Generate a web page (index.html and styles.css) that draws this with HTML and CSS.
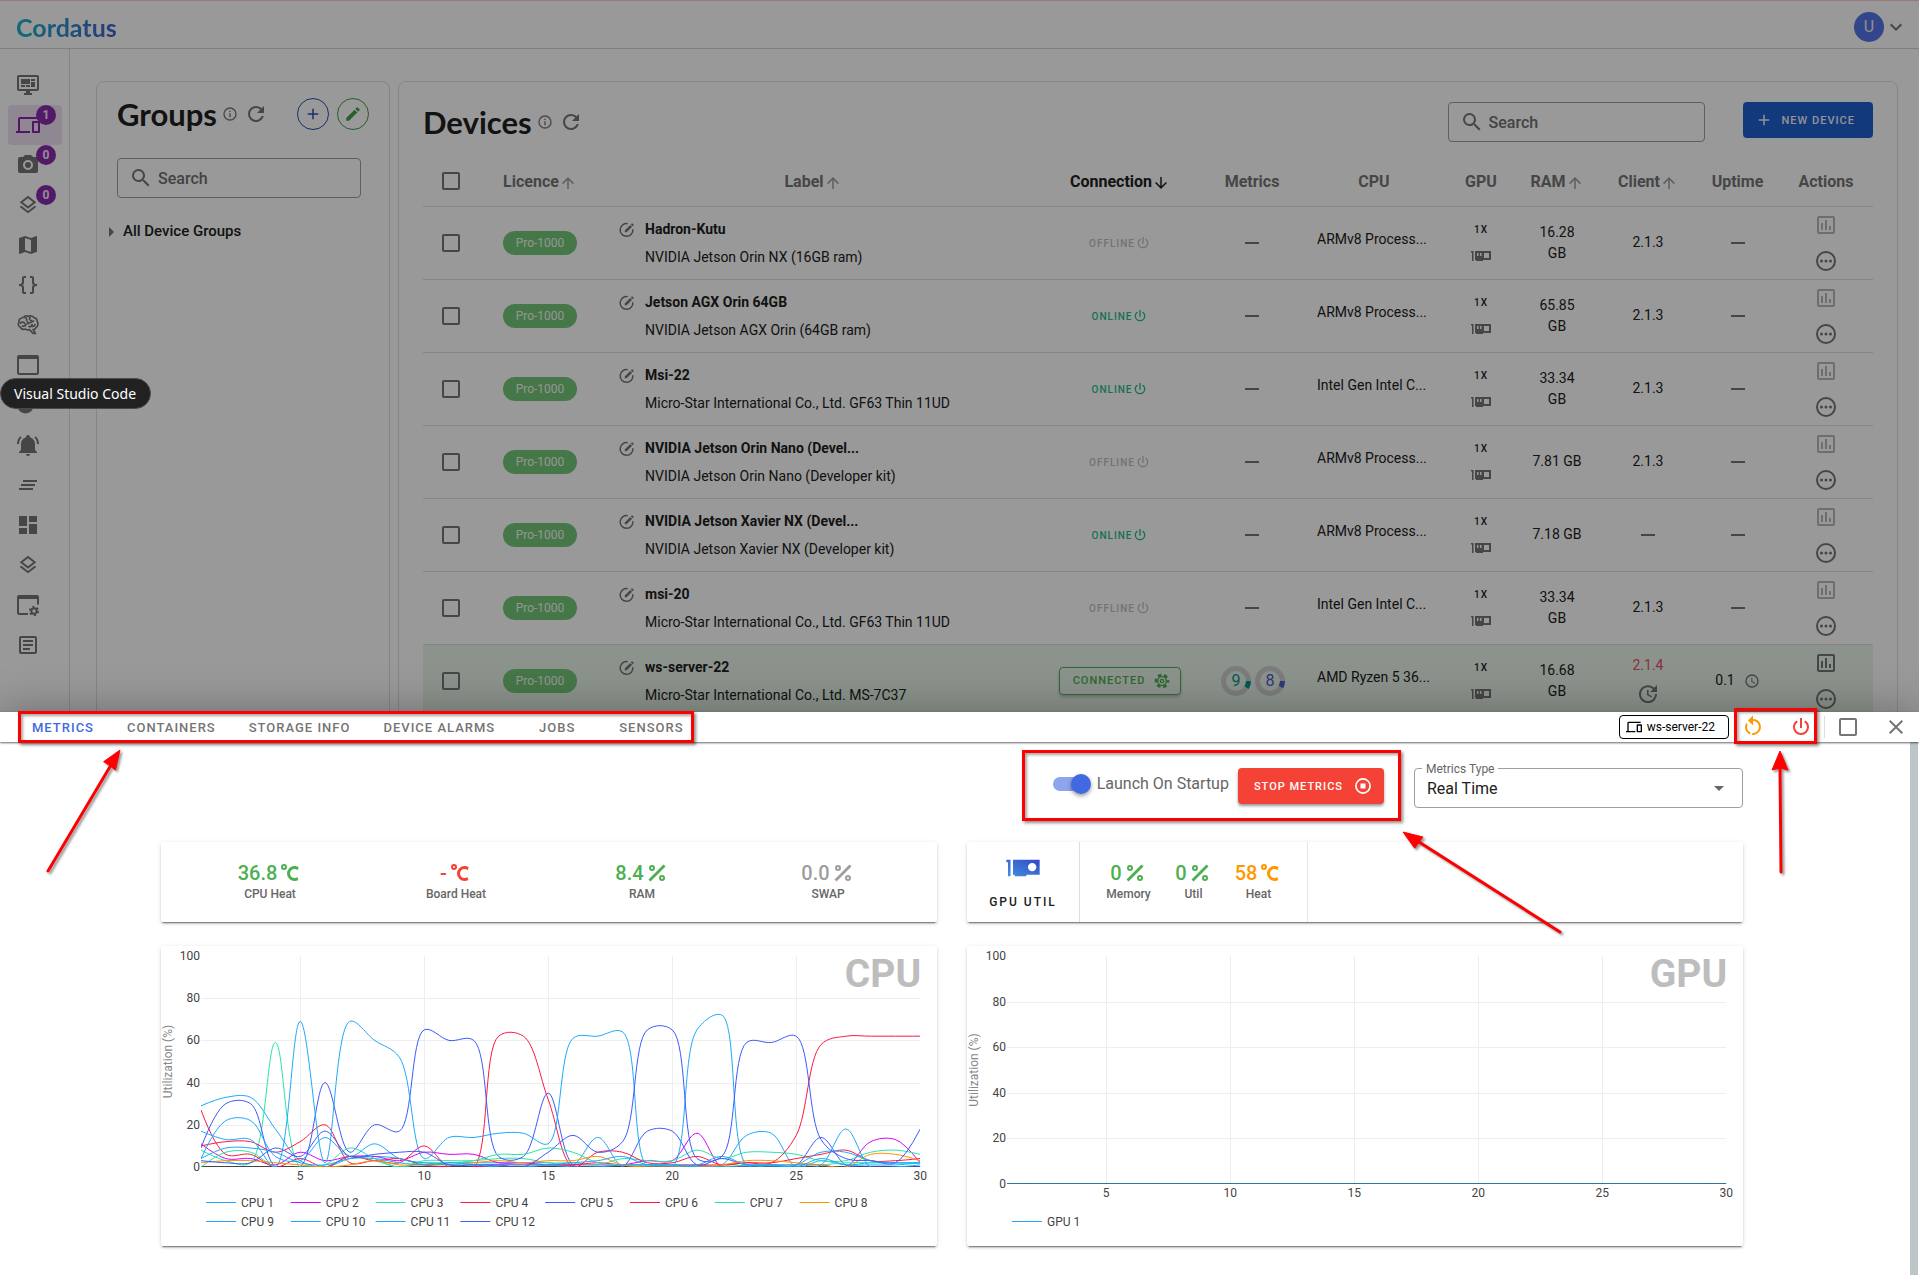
FILE: index.html
```html
<!DOCTYPE html>
<html lang="en">
<head>
<meta charset="utf-8">
<title>Cordatus</title>
<link rel="stylesheet" href="styles.css">
</head>
<body>
<svg class="sprite" aria-hidden="true">
  <symbol id="i-monitor" viewBox="0 0 24 24"><path d="M21,16V4H3V16H21M21,2A2,2 0 0,1 23,4V16A2,2 0 0,1 21,18H14V20H16V22H8V20H10V18H3C1.89,18 1,17.1 1,16V4C1,2.89 1.89,2 3,2H21M5,6H14V11H5V6M15,6H19V8H15V6M19,9V14H15V9H19M5,12H9V14H5V12M10,12H14V14H10V12Z"/></symbol>
  <symbol id="i-devices" viewBox="0 0 24 24"><path d="M4 6h18V4H4c-1.1 0-2 .9-2 2v12H0v2h14v-2H4V6zm19 2h-6c-.55 0-1 .45-1 1v10c0 .55.45 1 1 1h6c.55 0 1-.45 1-1V9c0-.55-.45-1-1-1zm-1 10h-4v-8h4v8z"/></symbol>
  <symbol id="i-camera" viewBox="0 0 24 24"><path fill-rule="evenodd" d="M4,4H7L9,2H15L17,4H20A2,2 0 0,1 22,6V18A2,2 0 0,1 20,20H4A2,2 0 0,1 2,18V6A2,2 0 0,1 4,4M12,7A5,5 0 0,0 7,12A5,5 0 0,0 12,17A5,5 0 0,0 17,12A5,5 0 0,0 12,7M12,9A3,3 0 0,1 15,12A3,3 0 0,1 12,15A3,3 0 0,1 9,12A3,3 0 0,1 12,9Z"/></symbol>
  <symbol id="i-layers" viewBox="0 0 24 24"><path d="M12,18.54L19.37,12.8L21,14.07L12,21.07L3,14.07L4.62,12.81L12,18.54M12,16L3,9L12,2L21,9L12,16M12,4.53L6.26,9L12,13.47L17.74,9L12,4.53Z"/></symbol>
  <symbol id="i-map" viewBox="0 0 24 24"><path fill-rule="evenodd" d="M15,19L9,16.89V5L15,7.11M20.5,3C20.44,3 20.39,3 20.34,3L15,5.1L9,3L3.36,4.9C3.15,4.97 3,5.15 3,5.38V20.5A.5.5 0 0,0 3.5,21C3.55,21 3.61,21 3.66,20.97L9,18.9L15,21L20.64,19.1C20.85,19 21,18.85 21,18.62V3.5A.5.5 0 0,0 20.5,3Z"/></symbol>
  <symbol id="i-braces" viewBox="0 0 24 24"><path d="M8,3A2,2 0 0,0 6,5V9A2,2 0 0,1 4,11H3V13H4A2,2 0 0,1 6,15V19A2,2 0 0,0 8,21H10V19H8V14A2,2 0 0,0 6,12A2,2 0 0,0 8,10V5H10V3M16,3A2,2 0 0,1 18,5V9A2,2 0 0,0 20,11H21V13H20A2,2 0 0,0 18,15V19A2,2 0 0,1 16,21H14V19H16V14A2,2 0 0,1 18,12A2,2 0 0,1 16,10V5H14V3H16Z"/></symbol>
  <symbol id="i-brain" viewBox="0 0 24 24"><g fill="none" stroke="currentColor" stroke-width="1.7" stroke-linecap="round" stroke-linejoin="round"><path d="M8 4C9 2.6 11 2.7 12 3.4C14 2.4 17 3 18 4.6C20.5 5 21.5 7 21.2 8.6C22.6 10.5 22 13.5 20 14.5C19.5 16 18.5 16.6 17 16.5L19.5 20.5H17L13.5 16.5C12 17.3 10.5 17 9.5 16C7.5 16.8 5 16 4.5 14.2C2.3 13.5 1.7 11 3 9.4C2.5 7 4 5 6 5C6.5 4.5 7 4 8 4Z"/><path d="M9 4.5C10.5 5 11 6 10.5 7.2M4.5 10C6 8.7 8 9 8.7 10.5M6.5 13C8 13.5 9.5 13 10 11.5M14 4.5C13 6 14 7.5 15.5 7.5M12.5 10.5C14 9 16 9.5 17.5 8M13 13.5C14.5 14 16 13 16 11.5M19 11.5C18.5 13 17.5 13.5 16.5 13.5M11.5 8.5V10.5"/></g></symbol>
  <symbol id="i-window" viewBox="0 0 24 24"><path fill-rule="evenodd" d="M21 2H3C1.9 2 1 2.9 1 4V20C1 21.1 1.9 22 3 22H21C22.1 22 23 21.1 23 20V4C23 2.9 22.1 2 21 2M21 20H3V6H21V20Z"/></symbol>
  <symbol id="i-disc" viewBox="0 0 24 24"><circle cx="9.5" cy="12" r="8.5"/></symbol>
  <symbol id="i-bell" viewBox="0 0 24 24"><path d="M21,19V20H3V19L5,17V11C5,7.9 7.03,5.17 10,4.29C10,4.19 10,4.1 10,4A2,2 0 0,1 12,2A2,2 0 0,1 14,4C14,4.1 14,4.19 14,4.29C16.97,5.17 19,7.9 19,11V17L21,19M14,21A2,2 0 0,1 12,23A2,2 0 0,1 10,21M19.75,3.19L18.33,4.61C20.04,6.3 21,8.6 21,11H23C23,8.07 21.84,5.25 19.75,3.19M1,11H3C3,8.6 3.96,6.3 5.67,4.61L4.25,3.19C2.16,5.25 1,8.07 1,11Z"/></symbol>
  <symbol id="i-clear" viewBox="0 0 24 24"><path d="M5,13H19V11H5M3,17H17V15H3M7,7V9H21V7"/></symbol>
  <symbol id="i-dashboard" viewBox="0 0 24 24"><path d="M13,3V9H21V3M13,21H21V11H13M3,21H11V15H3M3,13H11V3H3V13Z"/></symbol>
  <symbol id="i-windowcog" viewBox="0 0 24 24"><path d="M21 2H3C1.9 2 1 2.9 1 4V20C1 21.1 1.9 22 3 22H12V20H3V6H21V11.5H23V4C23 2.9 22.1 2 21 2Z"/><circle cx="18" cy="18" r="2.7" fill="none" stroke="currentColor" stroke-width="2"/><circle cx="18" cy="18" r="4.2" fill="none" stroke="currentColor" stroke-width="1.8" stroke-dasharray="2.2 2.2"/></symbol>
  <symbol id="i-text" viewBox="0 0 24 24"><path fill-rule="evenodd" d="M5,3C3.89,3 3,3.89 3,5V19C3,20.11 3.89,21 5,21H19C20.11,21 21,20.11 21,19V5C21,3.89 20.11,3 19,3H5M5,5H19V19H5V5M7,7V9H17V7H7M7,11V13H17V11H7M7,15V17H14V15H7Z"/></symbol>
  <symbol id="i-refresh" viewBox="0 0 24 24"><path d="M17.65,6.35C16.2,4.9 14.21,4 12,4A8,8 0 0,0 4,12A8,8 0 0,0 12,20C15.73,20 18.84,17.45 19.73,14H17.65C16.83,16.33 14.61,18 12,18A6,6 0 0,1 6,12A6,6 0 0,1 12,6C13.66,6 15.14,6.69 16.22,7.78L13,11H20V4L17.65,6.35Z"/></symbol>
  <symbol id="i-info" viewBox="0 0 24 24"><path d="M11,9H13V7H11M12,20C7.59,20 4,16.41 4,12C4,7.59 7.59,4 12,4C16.41,4 20,7.59 20,12C20,16.41 16.41,20 12,20M12,2A10,10 0 0,0 2,12A10,10 0 0,0 12,22A10,10 0 0,0 22,12A10,10 0 0,0 12,2M11,17H13V11H11V17Z"/></symbol>
  <symbol id="i-plus" viewBox="0 0 24 24"><path d="M19,13H13V19H11V13H5V11H11V5H13V11H19V13Z"/></symbol>
  <symbol id="i-pencil" viewBox="0 0 24 24"><path d="M20.71,7.04C21.1,6.65 21.1,6 20.71,5.63L18.37,3.29C18,2.9 17.35,2.9 16.96,3.29L15.12,5.12L18.87,8.87M3,17.25V21H6.75L17.81,9.93L14.06,6.18L3,17.25Z"/></symbol>
  <symbol id="i-search" viewBox="0 0 24 24"><path d="M9.5,3A6.5,6.5 0 0,1 16,9.5C16,11.11 15.41,12.59 14.44,13.73L14.71,14H15.5L20.5,19L19,20.5L14,15.5V14.71L13.73,14.44C12.59,15.41 11.11,16 9.5,16A6.5,6.5 0 0,1 3,9.5A6.5,6.5 0 0,1 9.5,3M9.5,5C7,5 5,7 5,9.5C5,12 7,14 9.5,14C12,14 14,12 14,9.5C14,7 12,5 9.5,5Z"/></symbol>
  <symbol id="i-up" viewBox="0 0 24 24"><path d="M13,20H11V8L5.5,13.5L4.08,12.08L12,4.16L19.92,12.08L18.5,13.5L13,8V20Z"/></symbol>
  <symbol id="i-down" viewBox="0 0 24 24"><path d="M11,4H13V16L18.5,10.5L19.92,11.92L12,19.84L4.08,11.92L5.5,10.5L11,16V4Z"/></symbol>
  <symbol id="i-chevron" viewBox="0 0 24 24"><path d="M7.41,8.58L12,13.17L16.59,8.58L18,10L12,16L6,10L7.41,8.58Z"/></symbol>
  <symbol id="i-power" viewBox="0 0 24 24"><path d="M16.56,5.44L15.11,6.89C16.84,7.94 18,9.83 18,12A6,6 0 0,1 12,18A6,6 0 0,1 6,12C6,9.83 7.16,7.94 8.88,6.88L7.44,5.44C5.36,6.88 4,9.28 4,12A8,8 0 0,0 12,20A8,8 0 0,0 20,12C20,9.28 18.64,6.88 16.56,5.44M13,3H11V13H13"/></symbol>
  <symbol id="i-edit" viewBox="0 0 24 24"><path d="M19.8 11A8.5 8.5 0 1 1 13 3.6" fill="none" stroke="currentColor" stroke-width="2"/><path d="M9 12.5V15H11.5L18.8 7.7L16.3 5.2ZM20.8 5.7A.7.7 0 0 0 20.8 4.8L19.2 3.2A.7.7 0 0 0 18.3 3.2L17.1 4.4L19.6 6.9Z"/></symbol>
  <symbol id="i-minus" viewBox="0 0 24 24"><path d="M19,13H5V11H19V13Z"/></symbol>
  <symbol id="i-cardvar" viewBox="0 0 24 24"><path fill-rule="evenodd" d="M2 7V8.5H3V17H4.5V7ZM6 7V16H7V17H14V16H22V7ZM8 9H9.5V12H8ZM11 9H12.5V12H11ZM15 9H20V14H15Z"/></symbol>
  <symbol id="i-chart" viewBox="0 0 24 24"><path fill-rule="evenodd" d="M19 3H5C3.9 3 3 3.9 3 5V19C3 20.1 3.9 21 5 21H19C20.1 21 21 20.1 21 19V5C21 3.9 20.1 3 19 3M19 19H5V5H19V19M9 17H7V10H9V17M13 17H11V7H13V17M17 17H15V13H17V17Z"/></symbol>
  <symbol id="i-more" viewBox="0 0 24 24"><circle cx="12" cy="12" r="9" fill="none" stroke="currentColor" stroke-width="2"/><circle cx="7.5" cy="12" r="1.5"/><circle cx="12" cy="12" r="1.5"/><circle cx="16.5" cy="12" r="1.5"/></symbol>
  <symbol id="i-update" viewBox="0 0 24 24"><path d="M21,10.12H14.22L16.96,7.3C14.23,4.6 9.81,4.5 7.08,7.2C4.35,9.91 4.35,14.28 7.08,17C9.81,19.7 14.23,19.7 16.96,17C18.32,15.65 19,14.08 19,12.1H21C21,14.08 20.12,16.65 18.36,18.39C14.85,21.87 9.15,21.87 5.64,18.39C2.14,14.92 2.11,9.28 5.62,5.81C9.13,2.34 14.76,2.34 18.27,5.81L21,3V10.12M12.5,8V12.25L16,14.33L15.28,15.54L11,13V8H12.5Z"/></symbol>
  <symbol id="i-clock" viewBox="0 0 24 24"><path d="M12,20A8,8 0 0,0 20,12A8,8 0 0,0 12,4A8,8 0 0,0 4,12A8,8 0 0,0 12,20M12,2A10,10 0 0,1 22,12A10,10 0 0,1 12,22C6.47,22 2,17.5 2,12A10,10 0 0,1 12,2M12.5,7V12.25L17,14.92L16.25,16.15L11,13V7H12.5Z"/></symbol>
  <symbol id="i-restart" viewBox="0 0 24 24"><path d="M12,4C14.1,4 16.1,4.8 17.6,6.3C20.7,9.4 20.7,14.5 17.6,17.6C15.8,19.5 13.3,20.2 10.9,19.9L11.4,17.9C13.1,18.1 14.9,17.5 16.2,16.2C18.5,13.9 18.5,10.1 16.2,7.7C15.1,6.6 13.5,6 12,6V10.6L7,5.6L12,0.6V4M6.3,17.6C3.7,15 3.3,11 5.1,7.9L6.6,9.4C5.5,11.6 5.9,14.4 7.8,16.2C8.3,16.7 8.9,17.1 9.6,17.4L9,19.4C8,19 7.1,18.4 6.3,17.6Z"/></symbol>
  <symbol id="i-close" viewBox="0 0 24 24"><path d="M19,6.41L17.59,5L12,10.59L6.41,5L5,6.41L10.59,12L5,17.59L6.41,19L12,13.41L17.59,19L19,17.59L13.41,12L19,6.41Z"/></symbol>
  <symbol id="i-square" viewBox="0 0 24 24"><rect x="4" y="4" width="16" height="16" rx="1" fill="none" stroke="currentColor" stroke-width="2"/></symbol>
  <symbol id="i-stop" viewBox="0 0 24 24"><circle cx="12" cy="12" r="8.5" fill="none" stroke="currentColor" stroke-width="2"/><rect x="9" y="9" width="6" height="6"/></symbol>
  <symbol id="i-cog" viewBox="0 0 24 24"><g fill="none" stroke="currentColor"><circle cx="12" cy="12" r="9" stroke-width="4" stroke-dasharray="5.4 4.02" stroke-dashoffset="2.7"/><circle cx="12" cy="12" r="6.5" stroke-width="2"/><circle cx="12" cy="12" r="2.5" stroke-width="2"/></g></symbol>
  <symbol id="i-celsius" viewBox="0 0 24 24"><path fill-rule="evenodd" d="M16.5,5C18.05,5 19.5,5.47 20.69,6.28L19.53,9.17C18.73,8.44 17.67,8 16.5,8C14,8 12,10 12,12.5C12,15 14,17 16.5,17C17.53,17 18.47,16.66 19.23,16.08L20.37,18.93C19.24,19.61 17.92,20 16.5,20A7.5,7.5 0 0,1 9,12.5A7.5,7.5 0 0,1 16.5,5M6,3A3,3 0 0,1 9,6A3,3 0 0,1 6,9A3,3 0 0,1 3,6A3,3 0 0,1 6,3M6,5A1,1 0 0,0 5,6A1,1 0 0,0 6,7A1,1 0 0,0 7,6A1,1 0 0,0 6,5Z"/></symbol>
  <symbol id="i-percent" viewBox="0 0 24 24"><path fill-rule="evenodd" d="M18.5,3.5L20.5,5.5L5.5,20.5L3.5,18.5ZM7,4A3,3 0 0,1 10,7A3,3 0 0,1 7,10A3,3 0 0,1 4,7A3,3 0 0,1 7,4M17,14A3,3 0 0,1 20,17A3,3 0 0,1 17,20A3,3 0 0,1 14,17A3,3 0 0,1 17,14M7,6A1,1 0 0,0 6,7A1,1 0 0,0 7,8A1,1 0 0,0 8,7A1,1 0 0,0 7,6M17,16A1,1 0 0,0 16,17A1,1 0 0,0 17,18A1,1 0 0,0 18,17A1,1 0 0,0 17,16Z"/></symbol>
</svg>

<div class="app">
  <header class="topbar">
    <a class="logo" href="#">Cordatus</a>
    <button class="account" type="button"><span class="avatar">U</span><svg class="icon"><use href="#i-chevron"/></svg></button>
  </header>
  <div class="workspace">
    <nav class="sidebar" aria-label="Main">
      <a href="#" aria-label="Dashboard"><svg class="icon"><use href="#i-monitor"/></svg></a>
      <a href="#" class="active" aria-label="Devices"><svg class="icon"><use href="#i-devices"/></svg><span class="badge">1</span></a>
      <a href="#" aria-label="Cameras"><svg class="icon"><use href="#i-camera"/></svg><span class="badge">0</span></a>
      <a href="#" aria-label="Layers"><svg class="icon s22"><use href="#i-layers"/></svg><span class="badge">0</span></a>
      <a href="#" aria-label="Map"><svg class="icon"><use href="#i-map"/></svg></a>
      <a href="#" aria-label="Code"><svg class="icon"><use href="#i-braces"/></svg></a>
      <a href="#" aria-label="Models"><svg class="icon"><use href="#i-brain"/></svg></a>
      <a href="#" aria-label="Applications"><svg class="icon"><use href="#i-window"/></svg></a>
      <a href="#" aria-label="Storage"><svg class="icon"><use href="#i-disc"/></svg></a>
      <a href="#" aria-label="Alarms"><svg class="icon"><use href="#i-bell"/></svg></a>
      <a href="#" aria-label="Logs"><svg class="icon"><use href="#i-clear"/></svg></a>
      <a href="#" aria-label="Boards"><svg class="icon"><use href="#i-dashboard"/></svg></a>
      <a href="#" aria-label="Stacks"><svg class="icon s22"><use href="#i-layers"/></svg></a>
      <a href="#" aria-label="Application settings"><svg class="icon"><use href="#i-windowcog"/></svg></a>
      <a href="#" aria-label="Documents"><svg class="icon"><use href="#i-text"/></svg></a>
    </nav>
    <main class="panels">
      <section class="panel groups">
        <div class="panel-head">
          <h1>Groups</h1>
          <svg class="icon s16"><use href="#i-info"/></svg>
          <button class="plain" type="button" aria-label="Refresh groups"><svg class="icon"><use href="#i-refresh"/></svg></button>
          <button class="round add" type="button" aria-label="Add group"><svg class="icon s18"><use href="#i-plus"/></svg></button>
          <button class="round modify" type="button" aria-label="Edit groups"><svg class="icon s18"><use href="#i-pencil"/></svg></button>
        </div>
        <label class="search"><svg class="icon"><use href="#i-search"/></svg><input type="text" placeholder="Search" aria-label="Search groups"></label>
        <a class="tree" href="#">All Device Groups</a>
      </section>
      <section class="panel devices">
        <div class="panel-head">
          <h1>Devices</h1>
          <svg class="icon s16"><use href="#i-info"/></svg>
          <button class="plain" type="button" aria-label="Refresh devices"><svg class="icon"><use href="#i-refresh"/></svg></button>
          <label class="search"><svg class="icon"><use href="#i-search"/></svg><input type="text" placeholder="Search" aria-label="Search devices"></label>
          <button class="new-device" type="button"><svg class="icon s18"><use href="#i-plus"/></svg>New Device</button>
        </div>
        <table>
          <colgroup><col class="c-check"><col class="c-lic"><col><col class="c-conn"><col class="c-met"><col class="c-cpu"><col class="c-gpu"><col class="c-ram"><col class="c-cli"><col class="c-up"><col class="c-act"></colgroup>
          <thead>
            <tr>
              <th class="check"><input type="checkbox" aria-label="Select all"></th>
              <th>Licence<svg class="icon sort"><use href="#i-up"/></svg></th>
              <th>Label<svg class="icon sort"><use href="#i-up"/></svg></th>
              <th class="sorted">Connection<svg class="icon sort"><use href="#i-down"/></svg></th>
              <th>Metrics</th><th>CPU</th><th>GPU</th>
              <th>RAM<svg class="icon sort"><use href="#i-up"/></svg></th>
              <th>Client<svg class="icon sort"><use href="#i-up"/></svg></th>
              <th>Uptime</th><th>Actions</th>
            </tr>
          </thead>
          <tbody>
            <tr>
              <td class="check"><input type="checkbox" aria-label="Select Hadron-Kutu"></td>
              <td><span class="chip">Pro-1000</span></td>
              <td class="label"><svg class="icon s18"><use href="#i-edit"/></svg><b>Hadron-Kutu</b><span>NVIDIA Jetson Orin NX (16GB ram)</span></td>
              <td><span class="state">Offline<svg class="icon s16"><use href="#i-power"/></svg></span></td>
              <td><svg class="icon"><use href="#i-minus"/></svg></td>
              <td class="cpu"><span>ARMv8 Process...</span></td>
              <td class="gpu"><b>1x</b><svg class="icon"><use href="#i-cardvar"/></svg></td>
              <td class="ram">16.28 GB</td><td>2.1.3</td>
              <td><svg class="icon"><use href="#i-minus"/></svg></td>
              <td class="actions"><button type="button" disabled aria-label="Metrics"><svg class="icon"><use href="#i-chart"/></svg></button><button type="button" aria-label="More"><svg class="icon"><use href="#i-more"/></svg></button></td>
            </tr>
            <tr>
              <td class="check"><input type="checkbox" aria-label="Select Jetson AGX Orin 64GB"></td>
              <td><span class="chip">Pro-1000</span></td>
              <td class="label"><svg class="icon s18"><use href="#i-edit"/></svg><b>Jetson AGX Orin 64GB</b><span>NVIDIA Jetson AGX Orin (64GB ram)</span></td>
              <td><span class="state online">Online<svg class="icon s16"><use href="#i-power"/></svg></span></td>
              <td><svg class="icon"><use href="#i-minus"/></svg></td>
              <td class="cpu"><span>ARMv8 Process...</span></td>
              <td class="gpu"><b>1x</b><svg class="icon"><use href="#i-cardvar"/></svg></td>
              <td class="ram">65.85 GB</td><td>2.1.3</td>
              <td><svg class="icon"><use href="#i-minus"/></svg></td>
              <td class="actions"><button type="button" disabled aria-label="Metrics"><svg class="icon"><use href="#i-chart"/></svg></button><button type="button" aria-label="More"><svg class="icon"><use href="#i-more"/></svg></button></td>
            </tr>
            <tr>
              <td class="check"><input type="checkbox" aria-label="Select Msi-22"></td>
              <td><span class="chip">Pro-1000</span></td>
              <td class="label"><svg class="icon s18"><use href="#i-edit"/></svg><b>Msi-22</b><span>Micro-Star International Co., Ltd. GF63 Thin 11UD</span></td>
              <td><span class="state online">Online<svg class="icon s16"><use href="#i-power"/></svg></span></td>
              <td><svg class="icon"><use href="#i-minus"/></svg></td>
              <td class="cpu"><span>Intel Gen Intel C...</span></td>
              <td class="gpu"><b>1x</b><svg class="icon"><use href="#i-cardvar"/></svg></td>
              <td class="ram">33.34 GB</td><td>2.1.3</td>
              <td><svg class="icon"><use href="#i-minus"/></svg></td>
              <td class="actions"><button type="button" disabled aria-label="Metrics"><svg class="icon"><use href="#i-chart"/></svg></button><button type="button" aria-label="More"><svg class="icon"><use href="#i-more"/></svg></button></td>
            </tr>
            <tr>
              <td class="check"><input type="checkbox" aria-label="Select NVIDIA Jetson Orin Nano"></td>
              <td><span class="chip">Pro-1000</span></td>
              <td class="label"><svg class="icon s18"><use href="#i-edit"/></svg><b>NVIDIA Jetson Orin Nano (Devel...</b><span>NVIDIA Jetson Orin Nano (Developer kit)</span></td>
              <td><span class="state">Offline<svg class="icon s16"><use href="#i-power"/></svg></span></td>
              <td><svg class="icon"><use href="#i-minus"/></svg></td>
              <td class="cpu"><span>ARMv8 Process...</span></td>
              <td class="gpu"><b>1x</b><svg class="icon"><use href="#i-cardvar"/></svg></td>
              <td class="ram">7.81 GB</td><td>2.1.3</td>
              <td><svg class="icon"><use href="#i-minus"/></svg></td>
              <td class="actions"><button type="button" disabled aria-label="Metrics"><svg class="icon"><use href="#i-chart"/></svg></button><button type="button" aria-label="More"><svg class="icon"><use href="#i-more"/></svg></button></td>
            </tr>
            <tr>
              <td class="check"><input type="checkbox" aria-label="Select NVIDIA Jetson Xavier NX"></td>
              <td><span class="chip">Pro-1000</span></td>
              <td class="label"><svg class="icon s18"><use href="#i-edit"/></svg><b>NVIDIA Jetson Xavier NX (Devel...</b><span>NVIDIA Jetson Xavier NX (Developer kit)</span></td>
              <td><span class="state online">Online<svg class="icon s16"><use href="#i-power"/></svg></span></td>
              <td><svg class="icon"><use href="#i-minus"/></svg></td>
              <td class="cpu"><span>ARMv8 Process...</span></td>
              <td class="gpu"><b>1x</b><svg class="icon"><use href="#i-cardvar"/></svg></td>
              <td class="ram">7.18 GB</td><td><svg class="icon"><use href="#i-minus"/></svg></td>
              <td><svg class="icon"><use href="#i-minus"/></svg></td>
              <td class="actions"><button type="button" disabled aria-label="Metrics"><svg class="icon"><use href="#i-chart"/></svg></button><button type="button" aria-label="More"><svg class="icon"><use href="#i-more"/></svg></button></td>
            </tr>
            <tr>
              <td class="check"><input type="checkbox" aria-label="Select msi-20"></td>
              <td><span class="chip">Pro-1000</span></td>
              <td class="label"><svg class="icon s18"><use href="#i-edit"/></svg><b>msi-20</b><span>Micro-Star International Co., Ltd. GF63 Thin 11UD</span></td>
              <td><span class="state">Offline<svg class="icon s16"><use href="#i-power"/></svg></span></td>
              <td><svg class="icon"><use href="#i-minus"/></svg></td>
              <td class="cpu"><span>Intel Gen Intel C...</span></td>
              <td class="gpu"><b>1x</b><svg class="icon"><use href="#i-cardvar"/></svg></td>
              <td class="ram">33.34 GB</td><td>2.1.3</td>
              <td><svg class="icon"><use href="#i-minus"/></svg></td>
              <td class="actions"><button type="button" disabled aria-label="Metrics"><svg class="icon"><use href="#i-chart"/></svg></button><button type="button" aria-label="More"><svg class="icon"><use href="#i-more"/></svg></button></td>
            </tr>
            <tr class="current">
              <td class="check"><input type="checkbox" aria-label="Select ws-server-22"></td>
              <td><span class="chip">Pro-1000</span></td>
              <td class="label"><svg class="icon s18"><use href="#i-edit"/></svg><b>ws-server-22</b><span>Micro-Star International Co., Ltd. MS-7C37</span></td>
              <td><button class="connected" type="button">Connected<svg class="icon s16"><use href="#i-cog"/></svg></button></td>
              <td><div class="rings">
                <svg viewBox="0 0 30 30"><circle class="track" cx="15" cy="15" r="12.5"/><circle class="teal" cx="15" cy="15" r="12.5" pathLength="100" stroke-dasharray="9 91"/><text class="teal-text" x="15" y="20">9</text></svg>
                <svg viewBox="0 0 30 30"><circle class="track" cx="15" cy="15" r="12.5"/><circle class="indigo" cx="15" cy="15" r="12.5" pathLength="100" stroke-dasharray="8 92"/><text class="indigo-text" x="15" y="20">8</text></svg>
              </div></td>
              <td class="cpu"><span>AMD Ryzen 5 36...</span></td>
              <td class="gpu"><b>1x</b><svg class="icon"><use href="#i-cardvar"/></svg></td>
              <td class="ram">16.68 GB</td>
              <td class="outdated"><span>2.1.4</span><svg class="icon"><use href="#i-update"/></svg></td>
              <td class="uptime">0.1<svg class="icon s16"><use href="#i-clock"/></svg></td>
              <td class="actions"><button type="button" aria-label="Metrics"><svg class="icon"><use href="#i-chart"/></svg></button><button type="button" aria-label="More"><svg class="icon"><use href="#i-more"/></svg></button></td>
            </tr>
          </tbody>
        </table>
      </section>
    </main>
  </div>
  <div class="scrim"></div>
  <div class="tooltip" role="tooltip">Visual Studio Code</div>
</div>

<section class="drawer" aria-label="Device details">
  <div class="drawer-bar">
    <div class="tabs callout">
      <button type="button" class="tab on">Metrics</button>
      <button type="button" class="tab">Containers</button>
      <button type="button" class="tab">Storage Info</button>
      <button type="button" class="tab">Device Alarms</button>
      <button type="button" class="tab">Jobs</button>
      <button type="button" class="tab">Sensors</button>
      <svg class="arrow" viewBox="0 0 110 170"><path d="M32 159L95 53"/><polygon points="104,38 87.6,49.7 93,53 99.4,58"/></svg>
    </div>
    <span class="device-chip"><svg class="icon s16"><use href="#i-devices"/></svg>ws-server-22</span>
    <div class="power callout">
      <button type="button" class="restart" aria-label="Restart"><svg class="icon"><use href="#i-restart"/></svg></button>
      <button type="button" class="shutdown" aria-label="Shut down"><svg class="icon"><use href="#i-power"/></svg></button>
      <svg class="arrow" viewBox="0 0 90 170"><path d="M46 160L45 57"/><polygon points="45,39 37,58 45,56 53,58"/></svg>
    </div>
    <div class="window-buttons">
      <button type="button" aria-label="Maximize"><svg class="icon"><use href="#i-square"/></svg></button>
      <button type="button" aria-label="Close"><svg class="icon"><use href="#i-close"/></svg></button>
    </div>
  </div>
  <div class="drawer-body">
    <div class="content">
      <div class="toolbar">
        <div class="startup callout">
          <label class="switch"><input type="checkbox" checked>Launch On Startup</label>
          <button type="button" class="stop">Stop Metrics<svg class="icon s20"><use href="#i-stop"/></svg></button>
          <svg class="arrow" viewBox="0 0 520 180"><path d="M507 164L366 74"/><polygon points="350,64 370,69 366,74 361.7,80.3"/></svg>
        </div>
        <div class="select">
          <label for="metrics-type">Metrics Type</label>
          <select id="metrics-type"><option>Real Time</option></select>
        </div>
      </div>
      <div class="columns">
        <div class="card stats">
          <div class="stat green"><span class="value">36.8<svg class="icon"><use href="#i-celsius"/></svg></span><span class="name">CPU Heat</span></div>
          <div class="stat red"><span class="value">-<svg class="icon"><use href="#i-celsius"/></svg></span><span class="name">Board Heat</span></div>
          <div class="stat green"><span class="value">8.4<svg class="icon"><use href="#i-percent"/></svg></span><span class="name">RAM</span></div>
          <div class="stat grey"><span class="value">0.0<svg class="icon"><use href="#i-percent"/></svg></span><span class="name">SWAP</span></div>
        </div>
        <div class="card gpu-card">
          <div class="gpu-title">
            <svg viewBox="0 0 24 24"><defs><linearGradient id="gpu-fill" x1="0" y1="1" x2="1" y2="0"><stop offset="0" stop-color="#4292dd"/><stop offset="1" stop-color="#3348c8"/></linearGradient></defs><path fill="url(#gpu-fill)" fill-rule="evenodd" d="M2 7V8.5H3V17H4.5V7ZM6 7V16H7V17H14V16H22V7ZM17.5 9A2.5 2.5 0 1 1 17.5 14A2.5 2.5 0 1 1 17.5 9Z"/></svg>
            <span>GPU Util</span>
          </div>
          <div class="gpu-stats">
            <div class="stat green"><span class="value">0<svg class="icon"><use href="#i-percent"/></svg></span><span class="name">Memory</span></div>
            <div class="stat green"><span class="value">0<svg class="icon"><use href="#i-percent"/></svg></span><span class="name">Util</span></div>
            <div class="stat orange"><span class="value">58<svg class="icon"><use href="#i-celsius"/></svg></span><span class="name">Heat</span></div>
          </div>
        </div>
        <div class="card"><svg class="chart" id="cpu-chart" viewBox="0 0 776 300" role="img" aria-label="CPU utilization"></svg></div>
        <div class="card"><svg class="chart" id="gpu-chart" viewBox="0 0 776 300" role="img" aria-label="GPU utilization"></svg></div>
      </div>
    </div>
    <div class="scrollbar"></div>
  </div>
</section>
<script src="charts.js"></script>
</body>
</html>
```

FILE: styles.css
```css
* { box-sizing: border-box; }

body {
  margin: 0;
  height: 100vh;
  display: flex;
  flex-direction: column;
  overflow: hidden;
  background: #fff;
  color: #212121;
  font: 14px/21px Roboto, "Liberation Sans", sans-serif;
}

button, input, select { font: inherit; color: inherit; }
button { border: 0; padding: 0; background: none; cursor: pointer; }
a { color: inherit; text-decoration: none; }
h1 { margin: 0; font: 700 31px/36px Lato, "Open Sans", sans-serif; }

.sprite { display: none; }
.icon { width: 24px; height: 24px; fill: currentColor; color: #757575; flex: none; display: inline-block; vertical-align: middle; }
.icon.s16 { width: 16px; height: 16px; }
.icon.s18 { width: 18px; height: 18px; }
.icon.s20 { width: 20px; height: 20px; }
.icon.s22 { width: 22px; height: 22px; }

/* Application behind the drawer */
.app { position: relative; flex: 1 1 0; min-height: 0; overflow: hidden; display: flex; flex-direction: column; }
.scrim { position: absolute; inset: 0; background: rgba(0, 0, 0, .4); }
.topbar {
  flex: none;
  height: 49px;
  padding: 5px 11px 0 16px;
  display: flex;
  align-items: center;
  justify-content: space-between;
  border-top: 1px solid #ffc9d2;
  border-bottom: 1px solid #d4d4d4;
}
.logo {
  font: 700 25px/30px Lato, "Open Sans", sans-serif;
  background: linear-gradient(90deg, #19b4c8, #4560cf);
  -webkit-background-clip: text;
  background-clip: text;
  color: transparent;
}
.account { display: flex; align-items: center; }
.avatar { width: 30px; height: 30px; border-radius: 50%; background: #5673e8; color: #eee; font-size: 16px; line-height: 29px; }

.workspace { flex: 1; display: flex; align-items: stretch; }
.sidebar { width: 70px; flex: none; padding: 16px 7px 0 8px; border-right: 1px solid #dedede; }
.sidebar a { position: relative; display: flex; align-items: center; height: 40px; padding-left: 8px; border-radius: 4px; }
.sidebar .icon.s22 { margin: 0 1px; }
.sidebar .active { background: #efe3f3; }
.sidebar .active .icon { color: #8e24aa; }
.badge {
  position: absolute;
  left: 28px;
  top: 0;
  width: 20px;
  height: 20px;
  border-radius: 50%;
  background: #8a2bb0;
  color: #f4e9f8;
  font-size: 12px;
  font-weight: 700;
  line-height: 20px;
  text-align: center;
}

.panels { flex: 1; min-width: 0; display: flex; gap: 8px; padding: 32px 21px 0 26px; }
.panel { border: 1px solid #dedede; border-radius: 8px; }
.panel-head { display: flex; align-items: center; }
.panel-head h1 + .icon { margin: 0 6px 0 5px; }
.plain { display: flex; }
.groups { width: 294px; flex: none; padding: 14px 20px 0; }
.round { width: 32px; height: 32px; border: 1px solid; border-radius: 50%; display: flex; align-items: center; justify-content: center; }
.round .icon { color: inherit; }
.add { color: #2a50b8; margin-left: auto; }
.modify { color: #43a047; margin: 0 8px; }
.search {
  height: 40px;
  display: flex;
  align-items: center;
  gap: 5px;
  padding: 0 11px;
  border: 1px solid #9e9e9e;
  border-radius: 4px;
}
.search input { width: 100%; min-width: 0; border: 0; padding: 0; background: none; outline: 0; font-size: 16px; }
.search input::placeholder { color: #707070; opacity: 1; font-weight: 500; }
.groups .search { margin: 26px 8px 0 0; }
.groups .panel-head { margin-right: -8px; }
.tree { display: flex; align-items: center; gap: 9px; margin: 23px 0 0 -8px; font-size: 15px; font-weight: 500; }
.tree::before { content: ""; border: 5px solid transparent; border-left-color: #757575; border-right: 0; }

.devices { flex: 1; min-width: 0; padding: 20px 24px 0; }
.devices .panel-head { align-items: flex-start; height: 52px; padding-bottom: 13px; }
.devices h1, .devices .plain, .devices h1 + .icon { align-self: center; }
.devices .search { width: 257px; margin: 0 38px 0 auto; }
.new-device {
  display: flex;
  align-items: center;
  gap: 9px;
  height: 36px;
  padding: 0 18px 0 12px;
  border-radius: 4px;
  background: #1f60cf;
  color: #f0f3fa;
  font-size: 11px;
  font-weight: 500;
  letter-spacing: 1px;
  text-transform: uppercase;
}
.new-device .icon { color: inherit; }

table { width: 100%; table-layout: fixed; border-collapse: collapse; }
.c-check { width: 67px; }
.c-lic { width: 100px; }
.c-conn { width: 168px; }
.c-met, .c-cli { width: 96px; }
.c-cpu { width: 148px; }
.c-gpu { width: 66px; }
.c-ram { width: 86px; }
.c-up { width: 83px; }
.c-act { width: 94px; }
th, td { padding: 0; text-align: center; border-bottom: 1px solid #dedede; white-space: nowrap; }
th { height: 52px; padding-top: 3px; font-size: 16px; font-weight: 700; color: #757575; }
th.sorted, th.sorted .sort { color: #212121; }
.sort { width: 18px; height: 18px; color: #9e9e9e; }
td { height: 73px; }
.check { padding-left: 19px; text-align: left; }
.check input { appearance: none; display: block; width: 18px; height: 18px; margin: 0; border: 2px solid #757575; border-radius: 2px; }
.chip { display: inline-block; padding: 0 13px; border-radius: 12px; background: #75c779; color: #f3faf3; font-size: 12px; line-height: 24px; vertical-align: middle; }
.label { padding-left: 28px; text-align: left; }
.label .icon { margin-right: 9px; }
.label b { line-height: 28px; }
.label span { display: block; padding-left: 27px; line-height: 28px; }
.state { display: inline-flex; align-items: center; color: #c0c0c0; font-size: 10px; font-weight: 500; letter-spacing: 1px; text-transform: uppercase; }
.state .icon { color: inherit; }
.state.online { color: #1fbd8a; }
.cpu span { display: block; width: 114px; margin: 0 auto 6px; text-align: left; }
.gpu b { display: block; padding-top: 2px; font-size: 10px; font-weight: 500; line-height: 20px; letter-spacing: 1px; text-transform: uppercase; }
.gpu .icon { display: block; margin: 4px auto 0; }
.ram { padding: 0 16px; white-space: normal; }
.actions button { display: block; margin: 0 auto; height: 24px; }
.actions button + button { margin-top: 12px; }
.actions .icon { display: block; }
.actions button:disabled .icon { color: #b8b8b8; }
.current td { background: #e8f5e9; }
.connected {
  display: inline-flex;
  align-items: center;
  gap: 9px;
  height: 28px;
  padding: 0 10px 0 13px;
  border: 1px solid #4caf50;
  border-radius: 4px;
  color: #4caf50;
  font-size: 11px;
  font-weight: 500;
  letter-spacing: 1px;
  text-transform: uppercase;
  box-shadow: 0 2px 3px rgba(0, 0, 0, .2);
}
.connected .icon { color: inherit; }
.rings { display: flex; justify-content: center; gap: 4px; padding-left: 2px; }
.rings svg { width: 30px; height: 30px; }
.rings circle { fill: none; stroke-width: 5; }
.rings text { font-size: 16px; text-anchor: middle; }
.track { stroke: #cfcfcf; }
.teal { stroke: #009688; }
.teal-text { fill: #009688; }
.indigo { stroke: #4a5fd0; }
.indigo-text { fill: #4a5fd0; }
.outdated span { display: block; color: #e8506a; }
.outdated .icon { display: block; margin: 6px auto 0; }
.uptime .icon { margin-left: 9px; }

.tooltip {
  position: absolute;
  left: 0;
  top: 378px;
  padding: 0 14px 0 13px;
  border: 1px solid #4a4a4a;
  border-radius: 16px;
  background: #212121;
  color: #fff;
  font: 14px/29px "Noto Sans", "Open Sans", sans-serif;
}

/* Bottom drawer */
.drawer { position: relative; flex: none; background: #fff; box-shadow: 0 -4px 38px rgba(0, 0, 0, .25); }
.drawer-bar {
  position: relative;
  display: flex;
  align-items: center;
  height: 30px;
  padding: 0 5px 0 16px;
  box-shadow: 0 1px 2px rgba(0, 0, 0, .6);
}
.tabs { display: flex; gap: 1px; height: 30px; margin-right: auto; }
.tab {
  min-width: 90px;
  padding: 0 16px;
  color: #757575;
  font-size: 13px;
  font-weight: 500;
  letter-spacing: 1px;
  text-transform: uppercase;
}
.tab.on { color: #4169e1; }
.device-chip {
  display: flex;
  align-items: center;
  gap: 5px;
  height: 24px;
  padding: 0 13px 0 6px;
  border: 1px solid #000;
  border-radius: 4px;
  color: #000;
  font-size: 12px;
}
.device-chip .icon { color: #000; }
.power { display: flex; gap: 12px; height: 30px; margin-left: 6px; }
.power button, .window-buttons button { width: 36px; display: flex; align-items: center; justify-content: center; }
.restart .icon { color: #ff9800; }
.shutdown .icon { color: #f44336; }
.window-buttons { display: flex; gap: 12px; height: 22px; margin-left: 5px; padding-left: 5px; border-left: 1px solid #dedede; }

/* Red guide boxes and arrows */
.callout { position: relative; }
.callout::after {
  content: "";
  position: absolute;
  border: 3px solid #f00;
  box-shadow: 2px 2px 3px rgba(0, 0, 0, .45), inset 2px 2px 3px rgba(0, 0, 0, .35);
  pointer-events: none;
}
.tabs::after { inset: -1px 6px -1px 2px; }
.power::after { inset: -4px 2px -2px -1px; }
.startup::after { inset: -18px -17px -17px -31px; }
.arrow { position: absolute; left: 0; top: 0; z-index: 1; overflow: visible; pointer-events: none; filter: drop-shadow(2px 2px 1px rgba(0, 0, 0, .4)); }
.arrow path { stroke: #f00; stroke-width: 3; stroke-linecap: round; }
.arrow polygon { fill: #f00; stroke: #f00; stroke-linejoin: round; }
.tabs .arrow { width: 110px; height: 170px; }
.power .arrow { width: 90px; height: 170px; }
.startup .arrow { width: 520px; height: 180px; }

.drawer-body { display: flex; }
.content { flex: 1; max-width: 1582px; min-width: 0; margin: 0 auto; padding: 26px 0 29px; }
.scrollbar { width: 8px; margin: 0 1px 0 6px; background: #bcc6c9; }
.toolbar { display: flex; justify-content: flex-end; gap: 30px; height: 40px; margin-bottom: 34px; }
.startup { display: flex; align-items: center; height: 36px; gap: 9px; }
.switch { display: flex; align-items: center; gap: 12px; height: 24px; margin-bottom: 5px; color: #666; font-size: 16px; }
.switch input { appearance: none; position: relative; width: 32px; height: 14px; margin: 0; border-radius: 7px; background: #8fa4ef; }
.switch input::before { content: ""; position: absolute; right: -6px; top: -3px; width: 20px; height: 20px; border-radius: 50%; background: #4169e1; box-shadow: 0 2px 4px rgba(0, 0, 0, .4); }
.stop {
  display: flex;
  align-items: center;
  gap: 10px;
  height: 36px;
  padding: 0 11px 0 16px;
  border-radius: 4px;
  background: #f44336;
  color: #fff;
  font-size: 11px;
  font-weight: 500;
  letter-spacing: 1px;
  text-transform: uppercase;
  box-shadow: 0 2px 3px rgba(0, 0, 0, .4);
}
.stop .icon { color: #fff; }
.select { position: relative; width: 329px; }
.select label { position: absolute; left: 8px; top: -8px; padding: 0 4px; background: #fff; color: #666; font-size: 12px; line-height: 18px; }
.select select { appearance: none; width: 100%; height: 40px; padding: 0 12px; border: 1px solid #9e9e9e; border-radius: 4px; background: #fff; font-size: 16px; }
.select::after { content: ""; position: absolute; right: 19px; top: 18px; border: 5px solid transparent; border-top-color: #666; border-bottom: 0; pointer-events: none; }

.columns { display: grid; grid-template-columns: 1fr 1fr; gap: 24px 30px; }
.card { background: #fff; border-radius: 2px; box-shadow: 0 3px 1px -2px rgba(0, 0, 0, .35), 0 2px 2px rgba(0, 0, 0, .14), 0 1px 5px rgba(0, 0, 0, .12); }
.stats { display: grid; grid-template-columns: repeat(4, 1fr); padding: 0 16px; }
.stat { display: flex; flex-direction: column; align-items: center; gap: 1px; padding: 19px 0 20px; }
.value { display: flex; align-items: center; font-size: 20px; font-weight: 500; line-height: 24px; gap: 1px; }
.value .icon { color: inherit; }
.name { color: #666; font-size: 12px; font-weight: 500; line-height: 16px; }
.green { color: #4caf50; }
.red { color: #f44336; }
.grey { color: #9e9e9e; }
.orange { color: #ff9800; }
.gpu-card { display: flex; }
.gpu-title { width: 113px; display: flex; flex-direction: column; align-items: center; border-right: 1px solid #ddd; font-size: 12px; font-weight: 500; letter-spacing: 2px; text-transform: uppercase; }
.gpu-title svg { width: 40px; height: 40px; margin: 6px 0 4px; }
.gpu-stats { display: grid; grid-template-columns: repeat(3, 65px); padding: 0 16px; border-right: 1px solid #e4e4e4; }

.chart { display: block; width: 100%; height: auto; font-size: 12px; fill: #444; }
.chart .grid { stroke: #eee; }
.chart .axis { stroke: #444; }
.chart .line { fill: none; }
.chart .mark { font-size: 39px; font-weight: 700; fill: #bdbdbd; }
.chart .unit { fill: #888; }
```

FILE: charts.js
```js
const SVG = 'http://www.w3.org/2000/svg';
const LEFT = 40, STEP = 24.8, TOP = 10;

const sky = '#1fa8fa', blue = '#3d5afe', red = '#ff1744', green = '#26e5a5', magenta = '#d500f9', orange = '#ff9100';

const cpu = [
  ['CPU 1', sky, [29,33,33,18,3,0,4,5,4,1,2,2,2,2,2,1,14,0,0,0,1,1,15,16,0,3,1,2,2,2]],
  ['CPU 2', magenta, [11,4,4,1,7,3,5,5,3,7,6,6,2,2,1,1,1,1,3,3,16,0,1,1,1,1,0,12,13,2]],
  ['CPU 3', green, [8,3,2,59,0,0,5,3,0,3,3,3,4,4,2,2,1,4,3,3,8,4,7,7,6,3,3,7,8,6]],
  ['CPU 4', red, [27,6,6,0,4,0,5,3,4,1,0,0,62,62,32,0,7,7,2,2,5,1,2,2,4,6,8,3,3,4]],
  ['CPU 5', blue, [9,30,30,0,0,40,7,20,17,65,60,60,5,5,35,1,0,0,17,17,1,4,1,1,1,14,1,0,0,0]],
  ['CPU 6', red, [10,12,12,7,12,20,2,3,2,10,0,0,1,1,1,1,2,1,1,1,1,1,2,2,15,58,62,62,62,62]],
  ['CPU 7', green, [0,7,7,0,0,1,9,4,0,2,2,3,6,6,9,7,2,1,1,1,0,0,1,1,1,1,2,2,2,2]],
  ['CPU 8', orange, [2,3,3,2,1,0,1,3,1,1,1,2,3,2,3,3,5,1,0,0,0,1,3,3,2,1,0,6,6,3]],
  ['CPU 9', sky, [17,13,13,0,69,2,69,60,52,4,14,14,16,16,11,61,62,64,0,0,65,72,1,1,0,1,18,0,0,1]],
  ['CPU 10', sky, [4,22,22,5,3,14,5,11,4,2,1,1,1,1,1,0,0,1,1,1,0,0,0,0,1,7,7,3,2,2]],
  ['CPU 11', sky, [4,9,9,7,2,1,4,4,2,1,2,1,0,0,1,2,3,5,1,1,1,5,1,1,0,4,1,1,1,2]],
  ['CPU 12', blue, [3,2,2,9,5,17,5,6,7,7,1,1,1,0,7,15,7,12,65,65,4,5,59,59,62,13,4,3,2,18]],
];
const gpu = [['GPU 1', sky, new Array(30).fill(0)]];

function add(parent, tag, attrs, text) {
  const el = document.createElementNS(SVG, tag);
  for (const key in attrs) el.setAttribute(key, attrs[key]);
  if (text !== undefined) el.textContent = text;
  parent.appendChild(el);
  return el;
}

/* Control points on both sides of a point, from its two neighbours. */
function tangent(prev, point, next) {
  const d1 = [prev[0] - point[0], prev[1] - point[1]];
  const d2 = [next[0] - point[0], next[1] - point[1]];
  const a = Math.pow(d1[0] ** 2 + d1[1] ** 2, 0.25);
  const b = Math.pow(d2[0] ** 2 + d2[1] ** 2, 0.25);
  const num = [0, 1].map(i => b * b * d1[i] - a * a * d2[i]);
  return [
    num.map((n, i) => point[i] + n / (3 * b * (a + b))),
    num.map((n, i) => point[i] - n / (3 * a * (a + b))),
  ];
}

function spline(points) {
  const last = points.length - 1;
  const t = [];
  for (let i = 1; i < last; i++) t[i] = tangent(points[i - 1], points[i], points[i + 1]);
  let d = `M${points[0]}Q${t[1][0]} ${points[1]}`;
  for (let i = 2; i < last; i++) d += `C${t[i - 1][1]} ${t[i][0]} ${points[i]}`;
  return d + `Q${t[last - 1][1]} ${points[last]}`;
}

function draw(id, title, series, bottom, legendTop) {
  const svg = document.getElementById(id);
  const x = n => LEFT + STEP * (n - 1);
  const y = v => bottom - (bottom - TOP) * v / 100;
  const right = x(30);

  const clip = add(add(svg, 'defs', {}), 'clipPath', { id: id + '-area' });
  add(clip, 'rect', { x: LEFT, y: TOP, width: right - LEFT, height: bottom - TOP });

  for (let v = 0; v <= 100; v += 20) {
    if (v && v < 100) add(svg, 'line', { class: 'grid', x1: LEFT, x2: right, y1: Math.round(y(v)) + 0.5, y2: Math.round(y(v)) + 0.5 });
    add(svg, 'text', { x: LEFT - 1, y: y(v) + 4, 'text-anchor': 'end' }, v);
  }
  for (let n = 5; n <= 30; n += 5) {
    const gx = Math.floor(x(n)) + 0.5;
    if (n < 30) add(svg, 'line', { class: 'grid', x1: gx, x2: gx, y1: TOP, y2: bottom });
    add(svg, 'text', { x: x(n), y: bottom + 13, 'text-anchor': 'middle' }, n);
  }
  add(svg, 'line', { class: 'axis', x1: LEFT, x2: right, y1: bottom - 0.5, y2: bottom - 0.5 });

  const plot = add(svg, 'g', { 'clip-path': `url(#${id}-area)` });
  series.forEach(([name, colour, values], i) => {
    const points = values.map((v, n) => [x(n + 1), y(v)]);
    add(plot, 'path', { class: 'line', stroke: colour, d: spline(points) });
    const lx = 45 + (i % 8) * 84.8;
    const ly = legendTop + Math.floor(i / 8) * 19;
    add(svg, 'line', { x1: lx, x2: lx + 30, y1: ly - 0.5, y2: ly - 0.5, stroke: colour });
    add(svg, 'text', { x: lx + 35, y: ly + 4 }, name);
  });

  const mid = (TOP + bottom) / 2;
  add(svg, 'text', { class: 'unit', x: 11, y: mid, 'text-anchor': 'middle', transform: `rotate(-90 11 ${mid})` }, 'Utilization (%)');
  add(svg, 'text', { class: 'mark', x: right + 1, y: 41, 'text-anchor': 'end' }, title);
}

draw('cpu-chart', 'CPU', cpu, 221, 257);
draw('gpu-chart', 'GPU', gpu, 238, 276);
```
